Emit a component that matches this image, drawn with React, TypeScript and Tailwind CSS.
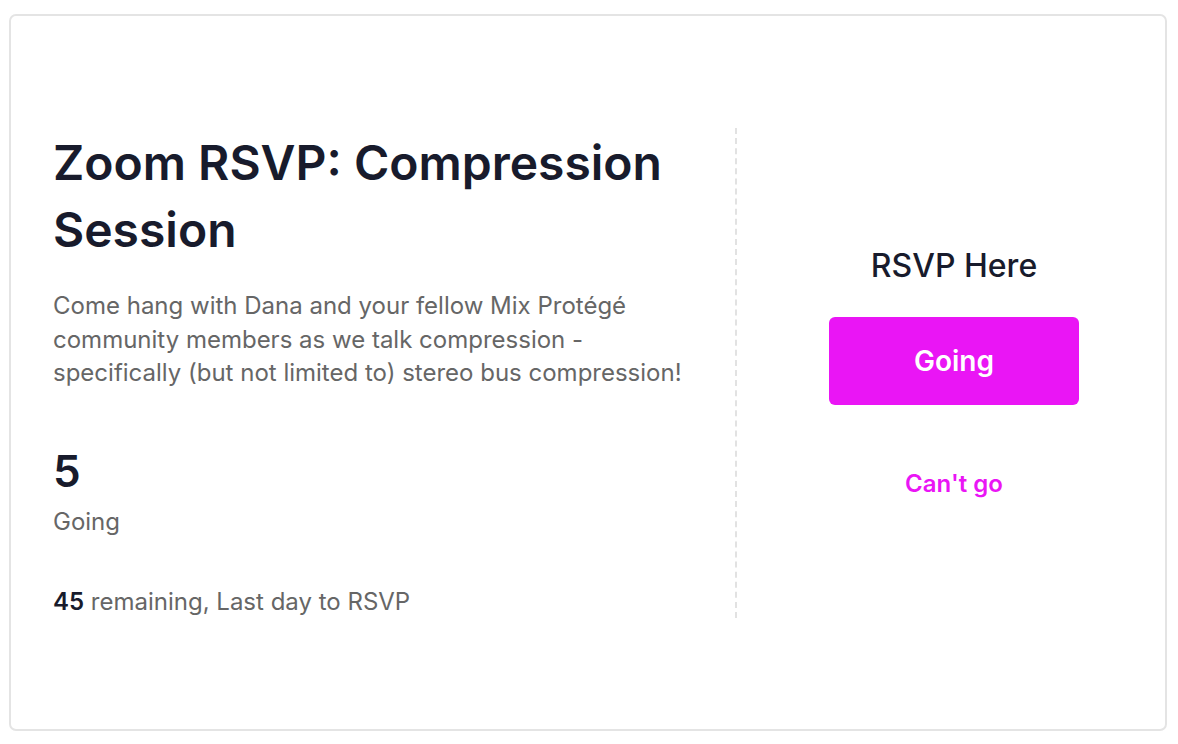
import React from "react";

export default function App() {
  return (
    <div
      className="w-[1178px] h-[744px] bg-white pt-[14px] pl-[9px]"
      style={{ fontFamily: "Inter, 'Noto Sans', sans-serif" }}
    >
      <div className="w-[1158px] h-[717px] border-2 border-[#e4e4e4] rounded-[7px] pl-[42px] pt-[112px]">
        <div className="flex h-[490px]">
          <div className="w-[682px] pr-[32px] flex flex-col items-start">
            <h1 className="mt-[1px] text-[48px] leading-[67px] font-semibold text-[#181b2c]">
              Zoom RSVP: Compression Session
            </h1>
            <p className="mt-[26px] text-[24px] leading-[33.5px] text-[#666666]">
              Come hang with Dana and your fellow Mix Protégé community members as we talk compression - specifically (but not limited to) stereo bus compression!
            </p>
            <div className="mt-[55px] text-[44px] leading-[52.8px] font-semibold text-[#181b2c]">5</div>
            <div className="mt-2 text-[24px] leading-[33px] text-[#666666]">Going</div>
            <div className="mt-[47px] text-[24px] leading-[33px] text-[#666666] whitespace-nowrap">
              <span className="font-semibold text-[#181b2c]">45</span> remaining, Last day to RSVP
            </div>
          </div>
          <div className="flex-1 border-l-2 border-dashed border-[#e2e2e2] pl-[6px] flex flex-col items-center justify-center">
            <div className="text-[32px] leading-[40px] font-medium text-[#181b2c]">RSVP Here</div>
            <button className="mt-[31px] w-[250px] h-[88px] rounded-[6px] bg-[#ea15f5] text-white text-[28px] font-semibold">
              Going
            </button>
            <button className="mt-[62px] text-[24px] leading-[33px] font-semibold text-[#ea15f5]">
              Can't go
            </button>
          </div>
        </div>
      </div>
    </div>
  );
}
